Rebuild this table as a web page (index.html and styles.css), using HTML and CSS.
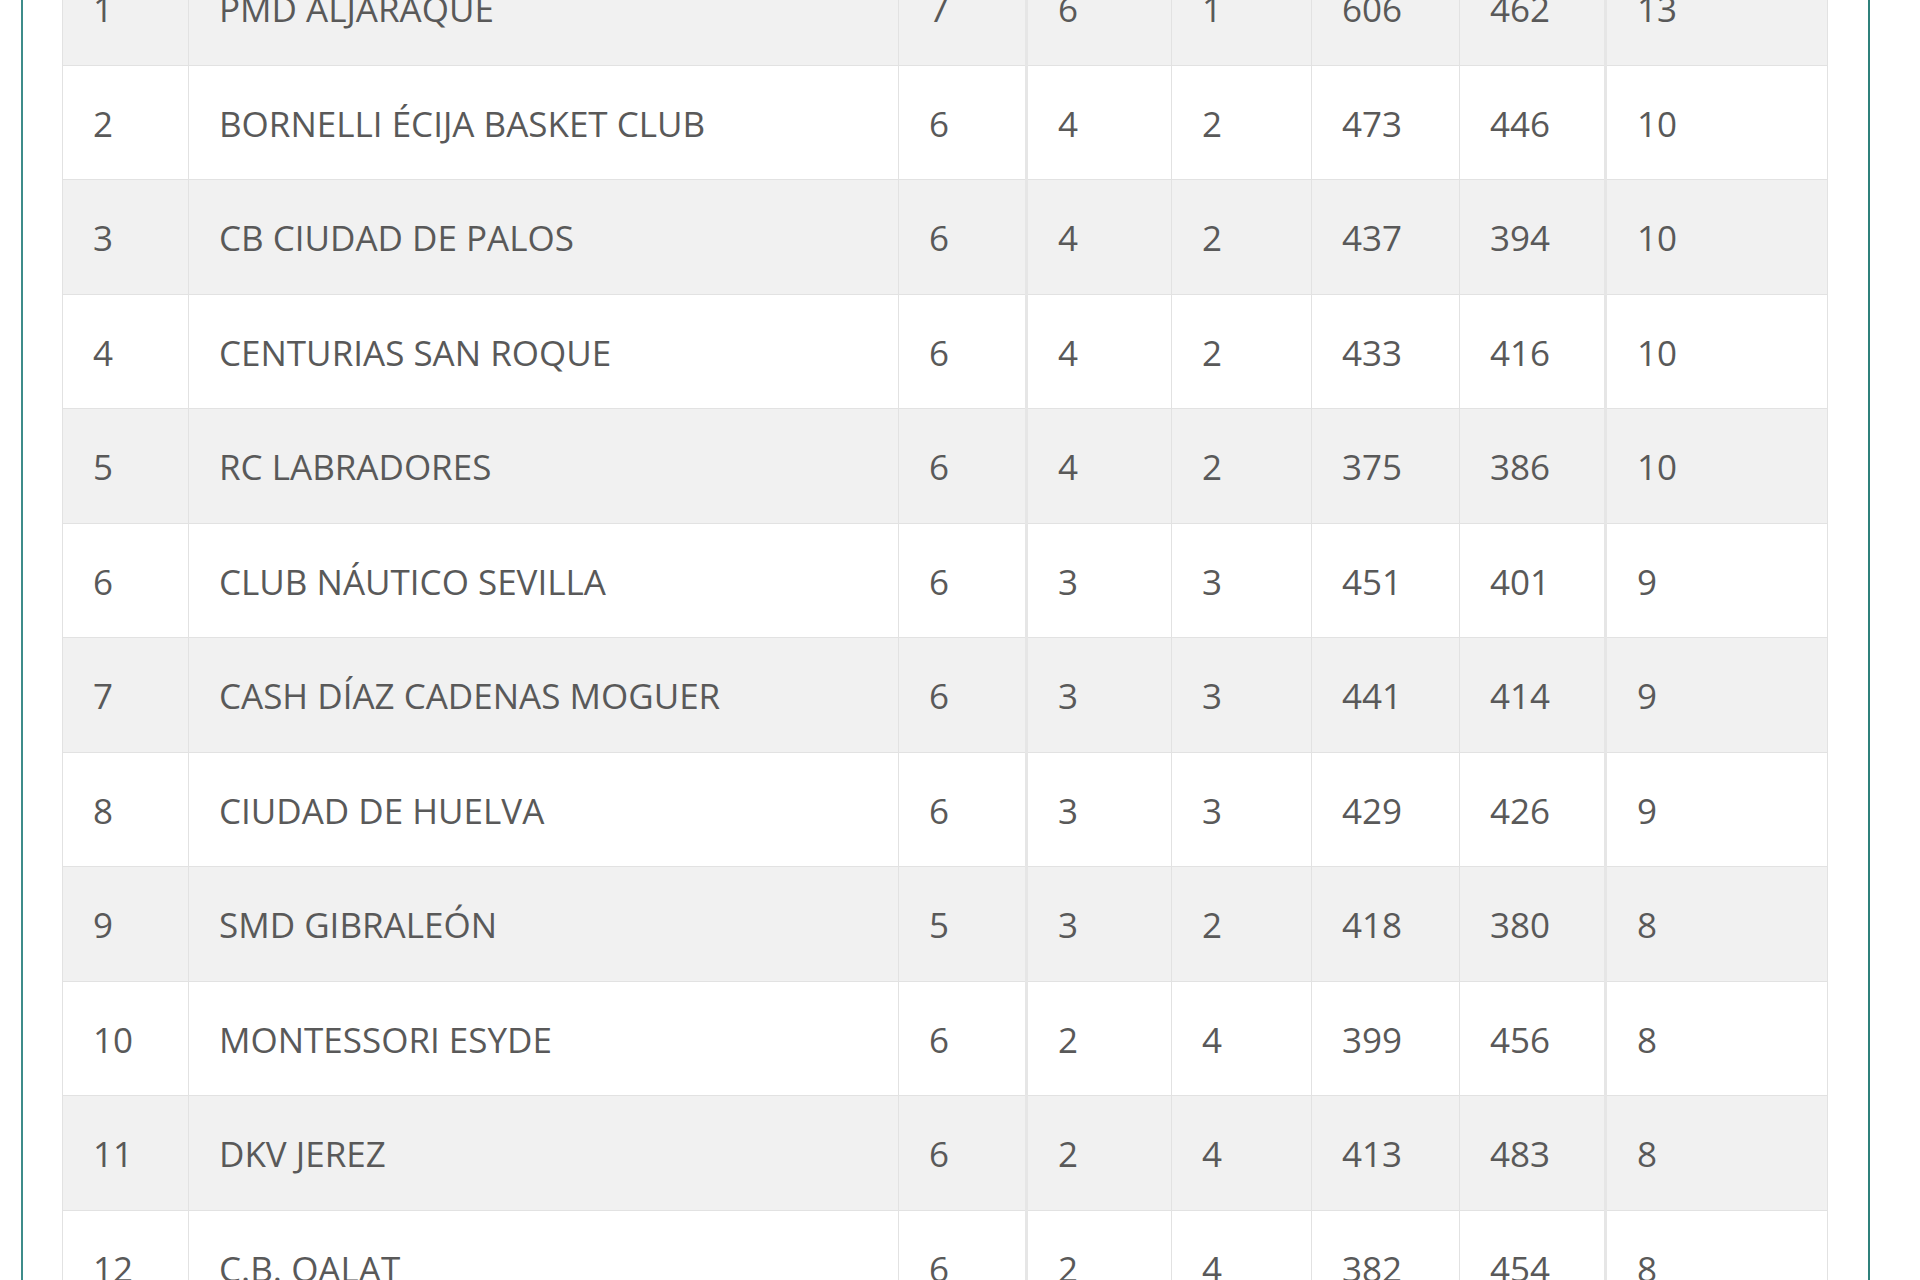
FILE: index.html
```html
<!DOCTYPE html>
<html lang="es">
<head>
<meta charset="utf-8">
<title>Clasificación</title>
<link rel="stylesheet" href="styles.css">
</head>
<body>
<div class="frame">
  <table class="standings">
    <colgroup>
      <col class="c-pos"><col class="c-team"><col class="c-pj"><col class="c-pg"><col class="c-pp"><col class="c-pf"><col class="c-pc"><col class="c-pts">
    </colgroup>
    <tbody>
      <tr><td>1</td><td>PMD ALJARAQUE</td><td>7</td><td class="sep">6</td><td>1</td><td>606</td><td>462</td><td class="sep">13</td></tr>
      <tr><td>2</td><td>BORNELLI ÉCIJA BASKET CLUB</td><td>6</td><td class="sep">4</td><td>2</td><td>473</td><td>446</td><td class="sep">10</td></tr>
      <tr><td>3</td><td>CB CIUDAD DE PALOS</td><td>6</td><td class="sep">4</td><td>2</td><td>437</td><td>394</td><td class="sep">10</td></tr>
      <tr><td>4</td><td>CENTURIAS SAN ROQUE</td><td>6</td><td class="sep">4</td><td>2</td><td>433</td><td>416</td><td class="sep">10</td></tr>
      <tr><td>5</td><td>RC LABRADORES</td><td>6</td><td class="sep">4</td><td>2</td><td>375</td><td>386</td><td class="sep">10</td></tr>
      <tr><td>6</td><td>CLUB NÁUTICO SEVILLA</td><td>6</td><td class="sep">3</td><td>3</td><td>451</td><td>401</td><td class="sep">9</td></tr>
      <tr><td>7</td><td>CASH DÍAZ CADENAS MOGUER</td><td>6</td><td class="sep">3</td><td>3</td><td>441</td><td>414</td><td class="sep">9</td></tr>
      <tr><td>8</td><td>CIUDAD DE HUELVA</td><td>6</td><td class="sep">3</td><td>3</td><td>429</td><td>426</td><td class="sep">9</td></tr>
      <tr><td>9</td><td>SMD GIBRALEÓN</td><td>5</td><td class="sep">3</td><td>2</td><td>418</td><td>380</td><td class="sep">8</td></tr>
      <tr><td>10</td><td>MONTESSORI ESYDE</td><td>6</td><td class="sep">2</td><td>4</td><td>399</td><td>456</td><td class="sep">8</td></tr>
      <tr><td>11</td><td>DKV JEREZ</td><td>6</td><td class="sep">2</td><td>4</td><td>413</td><td>483</td><td class="sep">8</td></tr>
      <tr><td>12</td><td>C.B. QALAT</td><td>6</td><td class="sep">2</td><td>4</td><td>382</td><td>454</td><td class="sep">8</td></tr>
    </tbody>
  </table>
</div>
</body>
</html>
```
FILE: styles.css
```css
html, body {
  margin: 0;
  padding: 0;
  background: #ffffff;
}

body {
  font-family: "Open Sans", "Liberation Sans", sans-serif;
  color: #595959;
  overflow: hidden;
}

.frame {
  margin: -50px 0 0 21px;
  border-left: 2px solid #3d8c8a;
  border-right: 2px solid #2f807b;
  padding: 0 39px 0 39px;
  box-sizing: content-box;
  width: 1767px;
}

.standings {
  width: 1765px;
  table-layout: fixed;
  border-collapse: collapse;
  font-size: 35px;
  line-height: 50px;
}

.c-pos { width: 126px; }
.c-team { width: 710px; }
.c-pj { width: 128px; }
.c-pg { width: 145px; }
.c-pp { width: 140px; }
.c-pf { width: 148px; }
.c-pc { width: 146px; }
.c-pts { width: 222px; }

.standings td {
  padding: 33px 30px 30.5px 30px;
  border: 1px solid #e2e2e2;
  border-top-color: #dddddd;
  white-space: nowrap;
  overflow: hidden;
  text-align: left;
  vertical-align: middle;
}

.standings td.sep {
  border-left: 3px solid #e6e6e6;
}

.standings tr:nth-child(odd) td {
  background: #f1f1f1;
}

.standings tr:nth-child(even) td {
  background: #ffffff;
}
```
